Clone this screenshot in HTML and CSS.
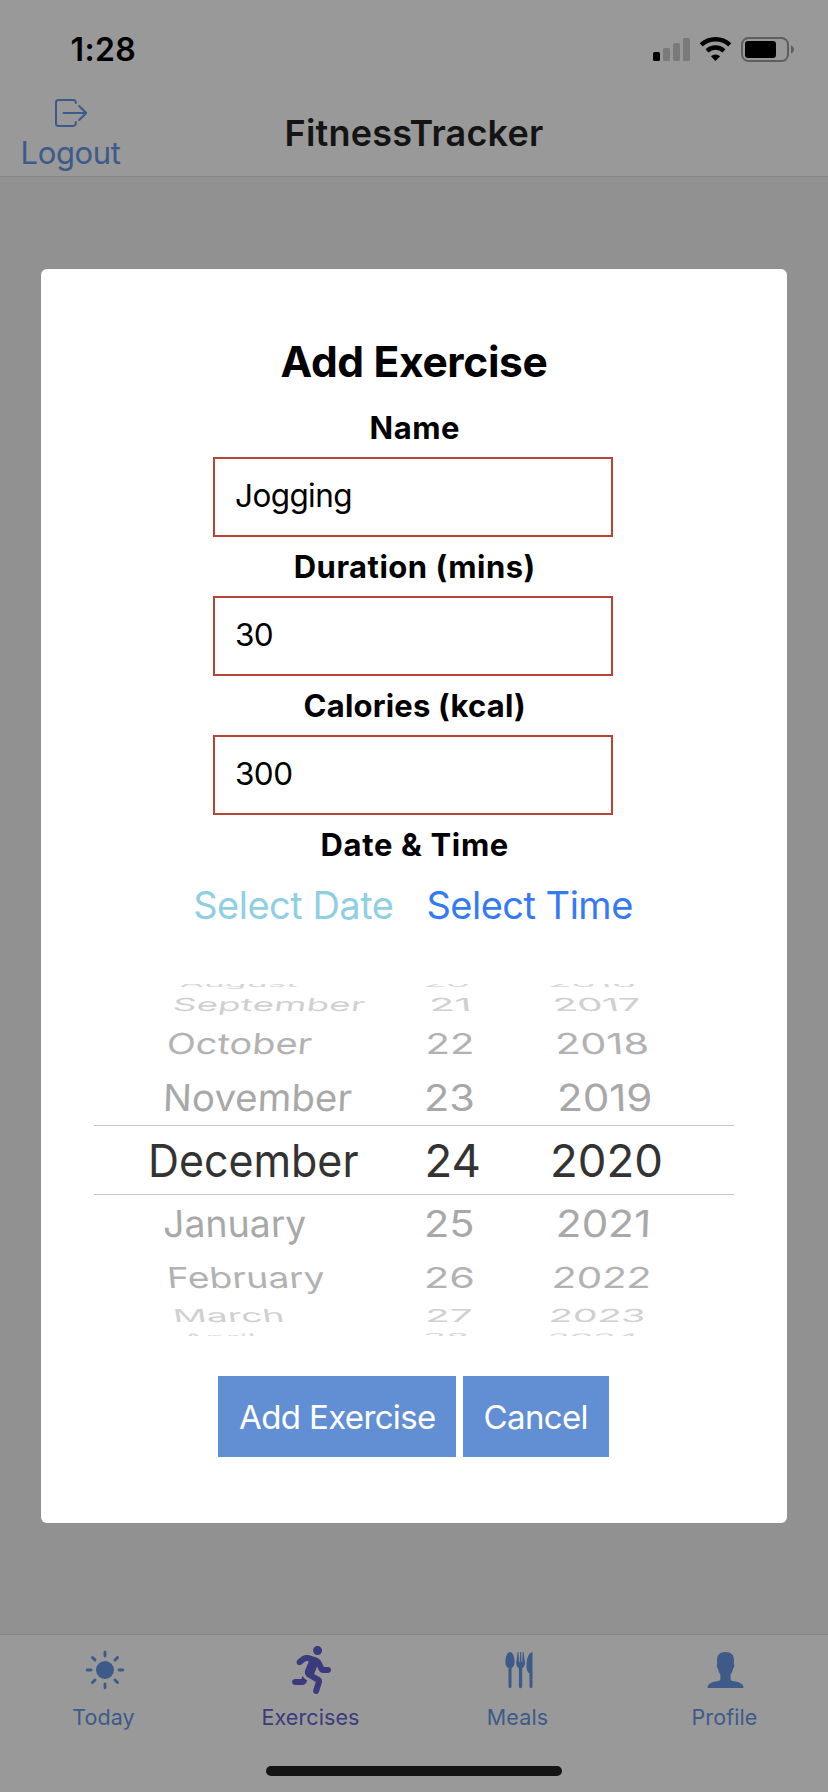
FILE: index.html
```html
<!DOCTYPE html>
<html lang="en">
<head>
<meta charset="utf-8">
<title>FitnessTracker</title>
<link rel="stylesheet" href="styles.css">
</head>
<body>
<div class="screen">
  <header class="header">
    <div class="status">
      <span class="clock">1:28</span>
      <svg class="status-icons" width="144" height="28" viewBox="0 0 144 28">
        <rect x="3" y="16" width="7" height="9" rx="1.5"/>
        <g fill="#7a7a7a"><rect x="13" y="12" width="7" height="13" rx="1.5"/><rect x="23" y="7" width="7" height="18" rx="1.5"/><rect x="33" y="2" width="7" height="23" rx="1.5"/></g>
        <g fill="none" stroke="#000" stroke-width="4.4"><path d="M51.2 8.8a21 21 0 0 1 28.6 0"/><path d="M57 14.8a12.6 12.6 0 0 1 17 0"/></g>
        <path d="M65.5 25l-4.6-4.7a6.8 6.8 0 0 1 9.2 0z"/>
        <rect x="92" y="2" width="46" height="23" rx="6.5" fill="none" stroke="#5e5e5e" stroke-width="2"/>
        <rect x="95" y="5" width="31" height="17" rx="3.2"/>
        <path d="M141 9.4c4 1.6 4 6.6 0 8.2z" fill="#5e5e5e"/>
      </svg>
    </div>
    <div class="nav">
      <div class="logout">
        <svg width="34" height="30" viewBox="0 0 34 30" fill="none" stroke="#3d5a89" stroke-width="2" stroke-linecap="round" stroke-linejoin="round">
          <path d="M21.8 5V4.400a2.500 2.500 0 0 0-2.500-2.500H4.500A2.500 2.500 0 0 0 2 4.400v21a2.500 2.500 0 0 0 2.500 2.500h14.800a2.500 2.500 0 0 0 2.500-2.500v-1.500"/>
          <path d="M9.500 15H32M25.200 8l7 7-7 7"/>
        </svg>
        <span class="logout-label">Logout</span>
      </div>
      <h1 class="title">FitnessTracker</h1>
    </div>
  </header>

  <main class="content">
    <section class="modal">
      <h2 class="heading">Add Exercise</h2>
      <div class="label name">Name</div>
      <div class="field">Jogging</div>
      <div class="label">Duration (mins)</div>
      <div class="field">30</div>
      <div class="label calories">Calories (kcal)</div>
      <div class="field">300</div>
      <div class="label date-time">Date &amp; Time</div>
      <div class="links"><span class="link off">Select Date</span><span class="link">Select Time</span></div>
      <div class="wheel">
        <div class="row aug"><span>August</span><span>20</span><span>2016</span></div>
        <div class="row sep"><span>September</span><span>21</span><span>2017</span></div>
        <div class="row oct"><span>October</span><span>22</span><span>2018</span></div>
        <div class="row nov"><span>November</span><span>23</span><span>2019</span></div>
        <div class="row dec"><span>December</span><span>24</span><span>2020</span></div>
        <div class="row jan"><span>January</span><span>25</span><span>2021</span></div>
        <div class="row feb"><span>February</span><span>26</span><span>2022</span></div>
        <div class="row mar"><span>March</span><span>27</span><span>2023</span></div>
        <div class="row apr"><span>April</span><span>28</span><span>2024</span></div>
      </div>
      <div class="actions">
        <div class="button add">Add Exercise</div>
        <div class="button cancel">Cancel</div>
      </div>
    </section>
  </main>

  <footer class="footer">
    <nav class="tabs">
      <div class="tab">
        <svg width="48" height="48" viewBox="0 0 48 48"><circle cx="25" cy="24" r="9" fill="#3d5a89"/><g stroke="#3d5a89" stroke-width="2.900" stroke-linecap="round"><path d="M25 6.200v3.800M25 38v3.800M7.200 24h3.800M39 24h3.800M12.500 11.500l2.500 2.500M35 34l2.500 2.500M37.500 11.500L35 14M15 34l-2.500 2.500"/></g></svg>
        <span class="tab-label">Today</span>
      </div>
      <div class="tab active">
        <svg width="48" height="48" viewBox="-54 0 512 512"><path fill="#3a3a7c" d="M272 96c26.510 0 48-21.490 48-48S298.510 0 272 0s-48 21.490-48 48 21.490 48 48 48zM113.690 317.470l-14.800 34.520H32c-17.670 0-32 14.330-32 32s14.330 32 32 32h77.450c19.250 0 36.580-11.440 44.110-29.090l8.790-20.520-10.670-6.300c-17.320-10.230-30.060-25.370-37.990-42.610zM384 223.990h-44.030l-26.060-53.250c-12.500-25.550-35.450-44.230-61.780-50.940l-71.080-21.140c-28.300-6.800-57.770-.55-80.840 17.140l-39.670 30.410c-14.030 10.750-16.690 30.830-5.940 44.860s30.840 16.660 44.860 5.910l39.690-30.410c7.670-5.890 17.440-8 25.270-6.140l14.700 4.370-37.460 87.390c-12.620 29.480-1.310 64.010 26.300 80.310l84.980 50.170-27.470 87.730c-5.280 16.860 4.110 34.820 20.970 40.090 3.190 1 6.410 1.480 9.580 1.480 13.610 0 26.230-8.770 30.520-22.450l31.640-101.060c5.910-20.770-2.890-43.080-21.640-54.390l-61.240-36.140 31.310-78.280 20.270 41.430c8 16.340 24.920 26.890 43.110 26.890H384c17.670 0 32-14.330 32-32s-14.330-31.990-32-31.990z"/></svg>
        <span class="tab-label">Exercises</span>
      </div>
      <div class="tab">
        <svg width="48" height="48" viewBox="0 0 48 48" fill="#3d5a89">
          <path d="M16 6c3 0 4.600 5.500 4.600 10 0 3.200-1.400 5.300-3.100 6.200V40.500a1.500 1.500 0 0 1-3 0V22.200c-1.700-.9-3.100-3-3.100-6.200C11.400 11.500 13 6 16 6z"/>
          <path d="M23.600 6h.9l.4 10h.8l.4-10h1l.4 10h.8l.4-10h.9l1.400 10.500c0 2.900-1.300 5-2.800 5.800v18.200a1.650 1.650 0 0 1-3.300 0V22.300c-1.500-.8-2.700-2.900-2.700-5.800z"/>
          <path d="M38.500 6v34.500a1.500 1.500 0 0 1-3 0V27.500c-1.800-1-3-3.500-3-8C32.500 12.500 34.800 6.300 38.500 6z"/>
        </svg>
        <span class="tab-label">Meals</span>
      </div>
      <div class="tab">
        <svg width="48" height="48" viewBox="0 0 48 48"><path fill="#3d5a89" d="M24.500 6c5.800 0 8.500 3 8.500 8l-.2 4c.9.7.5 4-.8 4.800-.6 2.900-1.400 4.400-2.400 5.700v4.700c.2 1.400 1.600 1.700 3.900 2.100 5 .9 9 2.700 9 6.700h-36c0-4 4-5.800 9-6.700 2.300-.4 3.700-.7 3.900-2.100v-4.700c-1-1.300-1.800-2.800-2.400-5.700-1.300-.8-1.700-4.100-.8-4.800l-.2-4c0-5 2.700-8 8.500-8z"/></svg>
        <span class="tab-label">Profile</span>
      </div>
    </nav>
    <div class="home-bar"></div>
  </footer>
</div>
</body>
</html>
```
FILE: styles.css
```css
* { box-sizing: border-box; }

body {
  margin: 0;
  font-family: Inter, "Liberation Sans", sans-serif;
  color: #000;
}

.screen {
  width: 828px;
  height: 1792px;
  display: flex;
  flex-direction: column;
  background: #919191;
  overflow: hidden;
}

/* Header */
.header {
  height: 177px;
  flex: none;
  background: #999;
  border-bottom: 1px solid #858585;
}

.status {
  height: 88px;
  padding: 0 34px 0 70.5px;
  display: flex;
  justify-content: space-between;
}

.clock {
  font-size: 32px;
  font-weight: 600;
  line-height: 99px;
  letter-spacing: 0.4px;
}

.status-icons { margin-top: 36px; }

.nav {
  height: 88px;
  display: grid;
  grid-template-columns: 141px 1fr 143px;
}

.logout {
  display: flex;
  flex-direction: column;
  align-items: center;
  padding-top: 10px;
  color: #3d5a89;
}

.logout-label {
  font-size: 31px;
  line-height: 40px;
  margin-top: 5px;
  letter-spacing: -0.4px;
}

.title {
  margin: 0;
  padding-left: 2px;
  font-size: 36px;
  font-weight: 600;
  line-height: 90px;
  text-align: center;
  letter-spacing: 0.2px;
  color: #141414;
}

/* Modal form */
.content {
  flex: 1;
  padding: 92px 41px 0;
}

.modal {
  height: 1254px;
  padding-top: 56px;
  display: flex;
  flex-direction: column;
  align-items: center;
  background: #fff;
  border-radius: 6px;
}

.heading {
  margin: 0;
  font-size: 42.5px;
  font-weight: 700;
  line-height: 73px;
  letter-spacing: -0.36px;
}

.label {
  padding-left: 1.5px;
  font-size: 31px;
  font-weight: 700;
  line-height: 59px;
  letter-spacing: 0.5px;
}

.calories { letter-spacing: 0.19px; }
.date-time { letter-spacing: 0.65px; }

.field {
  width: 400px;
  height: 80px;
  margin-right: 2px;
  padding-left: 20px;
  border: 2px solid #b94337;
  font-size: 31.5px;
  line-height: 74px;
  letter-spacing: -0.6px;
}

.links {
  display: flex;
  gap: 33px;
  height: 62px;
  margin-right: 2px;
}

.link {
  font-size: 38px;
  line-height: 62px;
  letter-spacing: -0.5px;
  color: #347af6;
}

.link.off { color: #90cfe3; }

/* Date wheel: each row is squashed and slanted to follow the drum */
.wheel {
  width: 640px;
  height: 352px;
  margin-top: 48px;
  display: flex;
  flex-direction: column;
  justify-content: center;
  overflow: hidden;
  font-size: 40px;
  white-space: nowrap;
}

.row {
  flex: none;
  height: var(--h);
  line-height: var(--h);
  display: grid;
  grid-template-columns: 301px 120px 219px;
}

.row span {
  justify-self: start;
  transform-origin: left center;
  transform: skewX(var(--k, 0deg)) scale(var(--sx, 1), var(--sy, 1));
}

.aug, .apr { --h: 15.2px; --sy: 0.22; color: #d6d6d6; }
.sep, .mar { --h: 25.6px; --sy: 0.445; color: #d0d0d0; }
.oct, .feb { --h: 51px; --sy: 0.722; color: #b2b2b2; }
.nov, .jan { --h: 57px; --sy: 0.93; color: #a8a8a8; }
.sep, .oct, .nov { line-height: calc(var(--h) + 2px); }
.dec {
  --h: 70px;
  font-size: 45.5px;
  color: #333;
  border: solid #c6c6c6;
  border-width: 1px 0;
  line-height: 70px;
}

.aug span:nth-child(1) { --sx: 0.883; --k: -14deg; margin-left: 86px; }
.aug span:nth-child(2) { --sx: 0.946; margin-left: 28px; }
.aug span:nth-child(3) { --sx: 0.978; --k: 18deg; margin-left: 32px; }

.sep span:nth-child(1) { --sx: 0.925; --k: -9deg; margin-left: 78.5px; }
.sep span:nth-child(2) { --sx: 1.047; --k: 6deg; margin-left: 34.4px; }
.sep span:nth-child(3) { --sx: 1; --k: 13deg; margin-left: 38px; }

.oct span:nth-child(1) { --sx: 0.948; --k: -5deg; margin-left: 73px; }
.oct span:nth-child(2) { --sx: 1; margin-left: 30.5px; }
.oct span:nth-child(3) { --sx: 1.036; --k: 4deg; margin-left: 40px; }

.nov span:nth-child(1) { --sx: 0.963; --k: -2deg; margin-left: 68.5px; }
.nov span:nth-child(2) { --sx: 1.036; margin-left: 29px; }
.nov span:nth-child(3) { --sx: 1.053; --k: 2deg; margin-left: 42px; }

.dec span:nth-child(1) { --sx: 0.943; margin-left: 54px; }
.dec span:nth-child(2) { margin-left: 29.5px; }
.dec span:nth-child(3) { margin-left: 35px; }

.jan span:nth-child(1) { --sx: 0.936; --k: 2deg; margin-left: 69px; }
.jan span:nth-child(2) { --sx: 1.037; margin-left: 29px; }
.jan span:nth-child(3) { --sx: 1.053; --k: -2deg; margin-left: 41.3px; }

.feb span:nth-child(1) { --sx: 0.932; --k: 5deg; margin-left: 72.5px; }
.feb span:nth-child(2) { --sx: 1.036; margin-left: 29px; }
.feb span:nth-child(3) { --sx: 1.01; --k: -4deg; margin-left: 37px; }

.mar span:nth-child(1) { --sx: 0.93; --k: 9deg; margin-left: 78.5px; }
.mar span:nth-child(2) { --sx: 1.014; margin-left: 29.500px; }
.mar span:nth-child(3) { --sx: 0.979; --k: -8deg; margin-left: 34px; }

.apr span:nth-child(1) { --sx: 0.85; --k: 14deg; margin-left: 88px; }
.apr span:nth-child(2) { --sx: 0.946; margin-left: 28px; }
.apr span:nth-child(3) { --sx: 0.922; --k: -14deg; margin-left: 32px; }

/* Buttons */
.actions {
  display: flex;
  gap: 7px;
  margin-top: 40px;
  margin-right: 1px;
}

.button {
  height: 81px;
  padding-left: 21px;
  background: #628fd3;
  color: #fff;
  font-size: 33px;
  line-height: 83px;
  letter-spacing: -0.63px;
}

.add { width: 238px; }
.cancel { width: 146px; padding-left: 20.5px; }

/* Tab bar */
.footer {
  height: 158px;
  flex: none;
  background: #999;
  border-top: 1px solid #858585;
}

.tabs {
  height: 131px;
  padding-top: 11px;
  display: grid;
  grid-template-columns: repeat(4, 1fr);
}

.tab {
  display: flex;
  flex-direction: column;
  align-items: center;
  color: #3d5a89;
}

.tab-label {
  font-size: 21.5px;
  line-height: 30px;
  margin-top: 8px;
  letter-spacing: 0.1px;
}

.active { color: #3a3a7c; }

.home-bar {
  width: 296px;
  height: 10px;
  margin: 0 auto;
  border-radius: 5px;
  background: #141414;
}
```
